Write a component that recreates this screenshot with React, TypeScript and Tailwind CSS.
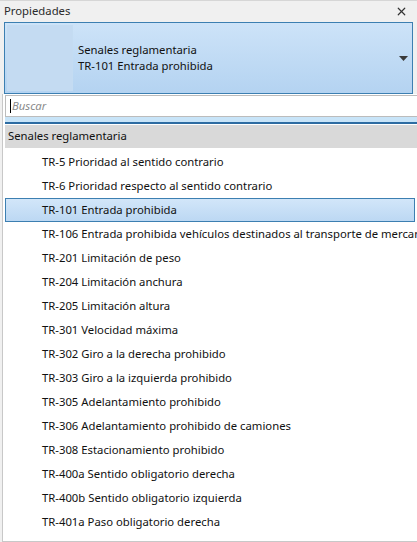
import { X } from 'lucide-react';

const items = [
  'TR-5 Prioridad al sentido contrario',
  'TR-6 Prioridad respecto al sentido contrario',
  'TR-101 Entrada prohibida',
  'TR-106 Entrada prohibida vehículos destinados al transporte de mercancías',
  'TR-201 Limitación de peso',
  'TR-204 Limitación anchura',
  'TR-205 Limitación altura',
  'TR-301 Velocidad máxima',
  'TR-302 Giro a la derecha prohibido',
  'TR-303 Giro a la izquierda prohibido',
  'TR-305 Adelantamiento prohibido',
  'TR-306 Adelantamiento prohibido de camiones',
  'TR-308 Estacionamiento prohibido',
  'TR-400a Sentido obligatorio derecha',
  'TR-400b Sentido obligatorio izquierda',
  'TR-401a Paso obligatorio derecha',
];

const selected = 'TR-101 Entrada prohibida';

export default function App() {
  return (
    <div
      className="flex h-[542px] w-[417px] flex-col overflow-hidden border-t border-[#d6d6d6] bg-[#f0f0f0] text-[11.3px] text-[#111]"
      style={{ fontFamily: '"Noto Sans", "Segoe UI", sans-serif' }}
    >
      <div className="flex h-[21px] shrink-0 items-center justify-between pl-[4px] pr-[9px]">
        <span className="text-[#2b2b2b]">Propiedades</span>
        <X size={13} strokeWidth={2.2} className="text-[#333]" />
      </div>

      <div className="ml-[4px] mr-[4px] flex h-[72px] shrink-0 items-center border border-[#3c7fb1] bg-gradient-to-b from-[#cde3f8] to-[#b4d3f1]">
        <div className="ml-[2px] h-[66px] w-[66px] shrink-0 border border-[#c4dcf2] bg-[#c4dbf2]" />
        <div className="ml-[5px] flex flex-1 flex-col leading-[16px]">
          <span>Senales reglamentaria</span>
          <span>TR-101 Entrada prohibida</span>
        </div>
        <svg width="9" height="5" viewBox="0 0 9 5" className="mr-[4px]">
          <path d="M0 0h9L4.5 5z" fill="#3a3a3a" />
        </svg>
      </div>

      <div className="ml-[2px] flex min-h-0 flex-1 flex-col border-l border-b border-[#c8c8c8] bg-white">
        <div className="mt-[1px] ml-[2px] flex h-[22px] shrink-0 items-center border border-[#bcbcbc] border-r-0 bg-white pl-[4px]">
          <span className="mr-[1px] h-[14px] w-px bg-black" />
          <span className="italic text-[#8a8a8a]">Buscar</span>
        </div>
        <div className="ml-[2px] h-[7px] shrink-0 border-b-2 border-[#2d6ca2] bg-[#c8e4f8]" />
        <div className="mt-[1px] ml-[2px] flex h-[23px] shrink-0 items-center bg-[#d9d9d9] pl-[3px]">
          Senales reglamentaria
        </div>
        <div className="flex flex-col pt-[2px]">
          {items.map((item) => (
            <div
              key={item}
              className={
                item === selected
                  ? 'ml-[2px] mr-[2px] flex h-[24px] shrink-0 items-center whitespace-nowrap border border-[#3c7fb1] bg-gradient-to-b from-[#d2e6f9] to-[#bcd8f3] pl-[36px]'
                  : 'ml-[2px] flex h-[24px] shrink-0 items-center whitespace-nowrap border border-transparent pl-[36px]'
              }
            >
              {item}
            </div>
          ))}
        </div>
      </div>
    </div>
  );
}
